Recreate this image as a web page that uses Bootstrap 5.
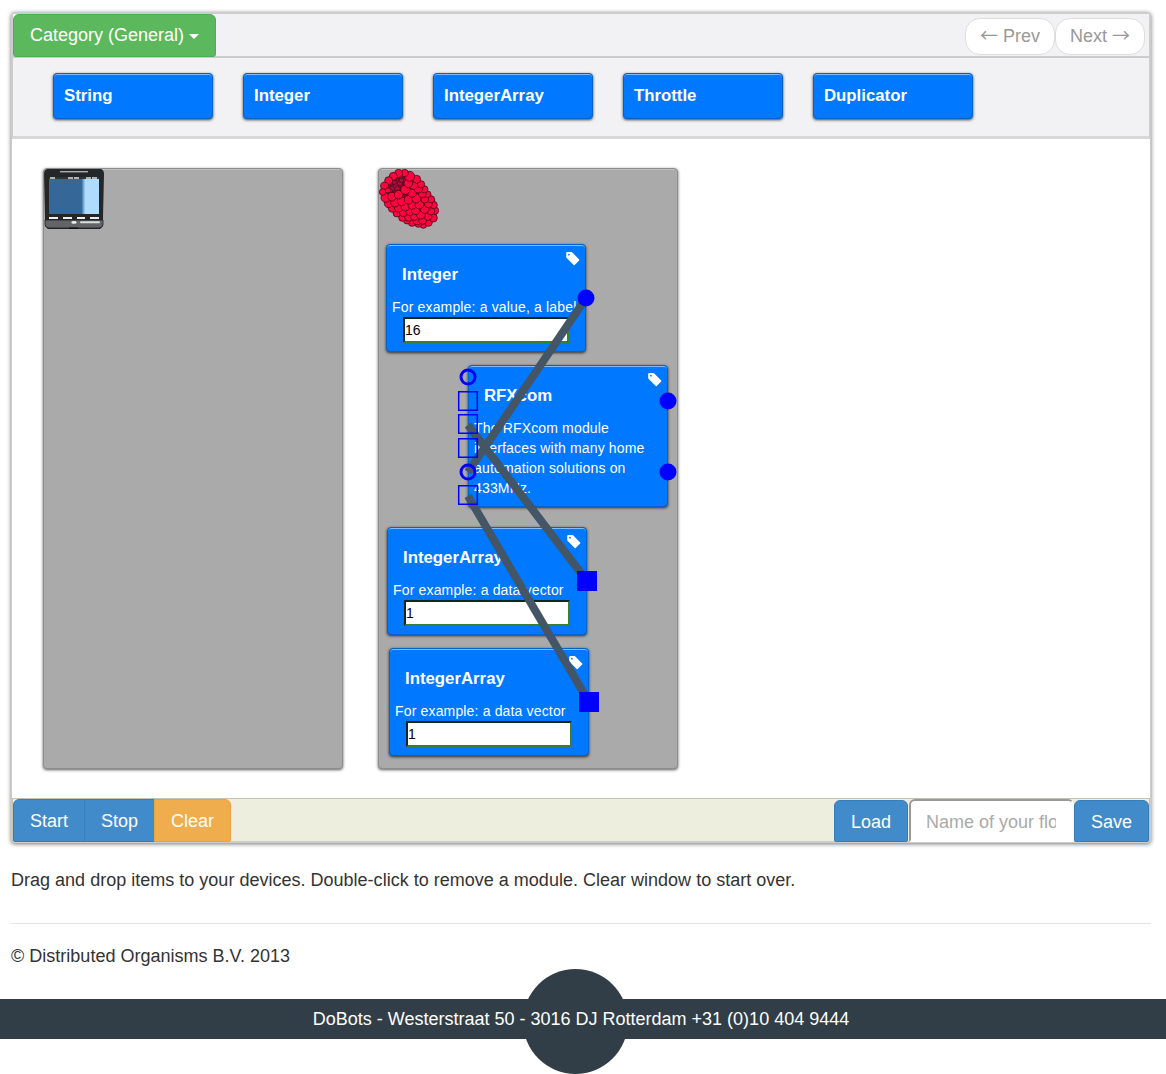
<!DOCTYPE html>
<html lang="en">
<head>
<meta charset="utf-8">
<title>DoBots flow editor</title>
<link href="https://cdn.jsdelivr.net/npm/bootstrap@5.3.0/dist/css/bootstrap.min.css" rel="stylesheet">
<style>
body{font-family:"Liberation Sans",Arial,sans-serif;font-size:18px;line-height:26px;color:#333;min-height:1074px;background:#fff}
.editor{margin:12px 15px 0 11px;height:831px;border:1px solid #ccc;border-radius:4px;box-shadow:0 1px 4px rgba(0,0,0,.55);background:#fff}
.catbar{height:45px;background:#f2f2f4;border:1px solid #ccc;border-bottom-width:2px}
.palette{height:81px;background:#f2f2f4;border:1px solid #ccc;border-top:0;border-bottom:3px solid #d8d8d8;padding:15px 0 0 40px;gap:30px}
.btn{--bs-btn-font-size:18px;--bs-btn-line-height:24px;--bs-btn-padding-x:16px;--bs-btn-padding-y:9px;--bs-btn-border-radius:6px;--bs-btn-color:#fff;white-space:nowrap}
.btn-cat{--bs-btn-bg:#5cb85c;--bs-btn-border-color:#4cae4c;height:43px;width:203px;padding:8px 0 9px 16px;text-align:left;border-radius:6px 6px 3px 3px}
.btn-cat.dropdown-toggle::after{margin-left:5px;border-top-width:5px;border-left-width:5px;border-right-width:5px;vertical-align:2px}
.btn-blue{--bs-btn-bg:#428bca;--bs-btn-border-color:#357ebd}
.btn-amber{--bs-btn-bg:#f0ad4e;--bs-btn-border-color:#eea236}
.pagelink{width:90px;height:37px;border:1px solid #ddd;border-radius:15px;background:#fff;color:#999;padding:4px 0 0 14px;text-decoration:none;white-space:nowrap}
.arrow{font-family:"Noto Sans CJK JP",sans-serif;line-height:1}
.block{background:#0078ff;border:1px solid #0062cc;border-radius:4px;box-shadow:0 1px 3px rgba(0,0,0,.75),inset 0 1px 0 rgba(255,255,255,.5);color:#fff}
.block h2{font-size:16.8px;font-weight:700;line-height:20px;margin:0}
.block-sm{width:160px;height:46px;padding:12px 10px}
.stage{height:659px;padding:29px 31px 0;gap:35px}
.device{width:300px;height:601px;background:#aaa;border:1px solid #8e8e8e;border-radius:4px;box-shadow:0 1px 3px rgba(0,0,0,.65),inset 0 1px 0 rgba(255,255,255,.25);position:relative}
.device>svg{display:block}
.node{position:absolute;width:200px;padding:20px 5px 0}
.node h2{margin-left:10px;margin-bottom:12px}
.node p{font-size:14px;line-height:20px;letter-spacing:.16px;margin:0;white-space:nowrap}
.node p.wraps{white-space:normal}
.node input{display:block;width:166px;height:26px;margin-left:11px;border:2px solid;border-color:#10281b #3a7d34 #3a7d34 #10281b;padding:0;font-size:14px;color:#000;background:#fff;border-radius:0;outline:0}
.node .tag{position:absolute;right:5px;top:6px}
.n1{left:7px;top:75px;height:108px}.n2{left:89px;top:196px;height:142px}.n3{left:8px;top:358px;height:108px}.n4{left:10px;top:479px;height:108px}
.wires{position:absolute;left:0;top:0;pointer-events:none}
.bottombar{height:44px;background:#eeeedf;border:1px solid #c3c3b2;border-bottom-color:#ccc}
.bottombar .btn{height:43px;border-bottom-left-radius:2px;border-bottom-right-radius:2px}
.bottombar .saveset .btn{margin-top:1px;height:42px}
.flowname{width:165px;height:43px;border:2px solid;border-color:#999 #fff #fff #999;border-radius:6px 6px 0 0;padding:3px 16px 0 15px;font-size:18px;outline:0;background:#fff;margin-left:1px}
.flowname::placeholder{color:#aaa}
.notes{margin:24px 15px 0 11px;letter-spacing:.01px}
.notes hr{margin:30px 0 19px;border-color:#e4e4e4;opacity:1}
.foot{height:40px;background:#313e47;position:relative;color:#fff;margin-top:30px}
.disc{position:absolute;width:105px;height:105px;border-radius:50%;background:#313e47;left:522.5px;top:-30px}
.foot span{position:relative;left:-2px}
</style>
<script src="https://cdn.jsdelivr.net/npm/bootstrap@5.3.0/dist/js/bootstrap.bundle.min.js"></script>
</head>
<body>
<main class="editor">
  <div class="catbar d-flex justify-content-between">
    <button class="btn btn-cat dropdown-toggle">Category (General)</button>
    <div class="d-flex pt-1 pe-1"><a class="pagelink"><span class="arrow">←</span> Prev</a><a class="pagelink">Next <span class="arrow">→</span></a></div>
  </div>
  <div class="palette d-flex">
    <div class="block block-sm"><h2>String</h2></div>
    <div class="block block-sm"><h2>Integer</h2></div>
    <div class="block block-sm"><h2>IntegerArray</h2></div>
    <div class="block block-sm"><h2>Throttle</h2></div>
    <div class="block block-sm"><h2>Duplicator</h2></div>
  </div>
  <div class="stage d-flex">
    <section class="device">
      <svg width="60" height="60" viewBox="0 0 60 60">
        <path d="M3 0H57Q60 1 60 5L59 48V57L56 60H4L1 57V48L0 5Q0 1 3 0Z" fill="#242628"/>
        <path d="M1 51H59V56Q58 59 55 59H5Q2 59 1 56Z" fill="#626467" stroke="#222" stroke-width=".8"/>
        <path d="M16 2.7H44" stroke="#aaa" stroke-width="1.5"/>
        <path d="M5 9H55V45H5Z" fill="#356799"/><path d="M40 9H55V45H40Z" fill="#afdbff"/><path d="M38.5 9H40.5V45H38.5Z" fill="#79a7ce"/>
        <path d="M5 9H55" stroke="#333" stroke-width="2"/><path d="M6 9H11M24 9H35M42 9H54" stroke="#ddd" stroke-width="1.3" stroke-dasharray="5 1"/>
        <path d="M5 49H14M19 49H28M33 49H41M46 49H55" stroke="#eee" stroke-width="1.8"/>
        <path d="M37 53.2H55" stroke="#ddd" stroke-width="2" stroke-linecap="round"/><ellipse cx="30" cy="53.4" rx="2.7" ry="1.3" fill="#eee"/><path d="M25 59.2H34" stroke="#111" stroke-width="1.5"/>
      </svg>
    </section>
    <section class="device">
      <svg width="60" height="60" viewBox="42 42 180 180">
        <path d="M60 80L100 50L145 60L210 135L215 180L185 212L145 205L60 135Z" fill="#8a0a2c"/>
        <g fill="#ff0540" stroke="#3a0512" stroke-width="2.2">
          <g fill="#a80f3f" stroke-width="1.5"><circle cx="82" cy="101" r="8"/><circle cx="92" cy="92" r="8"/><circle cx="105" cy="84" r="8"/><circle cx="88" cy="82" r="7"/><circle cx="97" cy="101" r="8"/><circle cx="109" cy="76" r="7"/><circle cx="76" cy="108" r="7"/></g>
          <circle cx="175" cy="210" r="10"/><circle cx="160" cy="207" r="10"/><circle cx="190" cy="202" r="12"/><circle cx="141" cy="203" r="11"/><circle cx="156" cy="198" r="12"/><circle cx="173" cy="196" r="12"/><circle cx="126" cy="197" r="10"/>
          <circle cx="205" cy="189" r="12"/><circle cx="189" cy="184" r="12"/><circle cx="112" cy="188" r="11"/><circle cx="131" cy="187" r="12"/><circle cx="148" cy="184" r="12"/><circle cx="168" cy="179" r="13"/><circle cx="210" cy="167" r="11"/><circle cx="198" cy="169" r="11"/>
          <circle cx="96" cy="174" r="12"/><circle cx="115" cy="173" r="12"/><circle cx="134" cy="170" r="12"/><circle cx="152" cy="166" r="13"/><circle cx="179" cy="162" r="13"/><circle cx="206" cy="150" r="11"/><circle cx="190" cy="146" r="12"/>
          <circle cx="82" cy="160" r="12"/><circle cx="101" cy="158" r="13"/><circle cx="121" cy="155" r="13"/><circle cx="142" cy="150" r="13"/><circle cx="163" cy="149" r="13"/><circle cx="198" cy="133" r="11"/><circle cx="179" cy="132" r="12"/>
          <circle cx="71" cy="145" r="13"/><circle cx="90" cy="143" r="13"/><circle cx="110" cy="139" r="13"/><circle cx="131" cy="134" r="13"/><circle cx="154" cy="130" r="14"/><circle cx="188" cy="118" r="10"/><circle cx="172" cy="116" r="12"/>
          <circle cx="178" cy="103" r="11"/><circle cx="141" cy="114" r="13"/><circle cx="160" cy="101" r="13"/><circle cx="168" cy="88" r="11"/><circle cx="62" cy="128" r="14"/><circle cx="81" cy="125" r="13"/><circle cx="101" cy="119" r="13"/>
          <circle cx="121" cy="104" r="14"/><circle cx="145" cy="90" r="13"/><circle cx="155" cy="73" r="12"/><circle cx="130" cy="85" r="13"/><circle cx="134" cy="64" r="15"/><circle cx="119" cy="54" r="11"/><circle cx="101" cy="55" r="12"/><circle cx="85" cy="64" r="12"/><circle cx="71" cy="77" r="12"/><circle cx="59" cy="93" r="12"/><circle cx="53" cy="111" r="10"/><circle cx="69" cy="106" r="8"/>
        </g>
      </svg>
      <article class="block node n1"><svg class="tag" width="15" height="15" viewBox="0 0 15 15"><path fill="#fff" fill-rule="evenodd" d="M2.2 1H6.8L14.2 8.4Q14.6 8.9 14.2 9.4L9.7 14Q9.2 14.5 8.7 14L1.2 6.5V2Q1.2 1 2.2 1ZM3.9 2.8a.9 .9 0 1 0 .1 1.8a.9 .9 0 1 0-.1-1.8Z"/></svg><h2>Integer</h2><p>For example: a value, a label</p><input value="16"></article>
      <article class="block node n2"><svg class="tag" width="15" height="15" viewBox="0 0 15 15"><path fill="#fff" fill-rule="evenodd" d="M2.2 1H6.8L14.2 8.4Q14.6 8.9 14.2 9.4L9.7 14Q9.2 14.5 8.7 14L1.2 6.5V2Q1.2 1 2.2 1ZM3.9 2.8a.9 .9 0 1 0 .1 1.8a.9 .9 0 1 0-.1-1.8Z"/></svg><h2>RFXcom</h2><p class="wraps">The RFXcom module interfaces with many home automation solutions on 433MHz.</p></article>
      <article class="block node n3"><svg class="tag" width="15" height="15" viewBox="0 0 15 15"><path fill="#fff" fill-rule="evenodd" d="M2.2 1H6.8L14.2 8.4Q14.6 8.9 14.2 9.4L9.7 14Q9.2 14.5 8.7 14L1.2 6.5V2Q1.2 1 2.2 1ZM3.9 2.8a.9 .9 0 1 0 .1 1.8a.9 .9 0 1 0-.1-1.8Z"/></svg><h2>IntegerArray</h2><p>For example: a data vector</p><input value="1"></article>
      <article class="block node n4"><svg class="tag" width="15" height="15" viewBox="0 0 15 15"><path fill="#fff" fill-rule="evenodd" d="M2.2 1H6.8L14.2 8.4Q14.6 8.9 14.2 9.4L9.7 14Q9.2 14.5 8.7 14L1.2 6.5V2Q1.2 1 2.2 1ZM3.9 2.8a.9 .9 0 1 0 .1 1.8a.9 .9 0 1 0-.1-1.8Z"/></svg><h2>IntegerArray</h2><p>For example: a data vector</p><input value="1"></article>
      <svg class="wires" width="310" height="600" viewBox="379 169 310 600">
        <path d="M586 298L468 472M468 425L587 581M468 496L589 702" stroke="#456" stroke-width="8" fill="none"/>
        <g fill="#00f"><circle cx="586" cy="298" r="8.5"/><circle cx="668" cy="401" r="8.5"/><circle cx="668" cy="472" r="8.5"/><path d="M577 571h20v20h-20zM579 692h20v20h-20z"/></g>
        <g fill="none" stroke="#00f"><g stroke-width="3"><circle cx="468" cy="377" r="7"/><circle cx="468" cy="472" r="7"/></g><path stroke-width="1.5" d="M458.7 391.7h18.6v18.6h-18.6zM458.7 414.7h18.6v18.6h-18.6zM458.7 438.7h18.6v18.6h-18.6zM458.7 485.7h18.6v18.6h-18.6z"/></g>
      </svg>
    </section>
  </div>
  <div class="bottombar d-flex justify-content-between">
    <div class="btn-group"><button class="btn btn-blue">Start</button><button class="btn btn-blue">Stop</button><button class="btn btn-amber">Clear</button></div>
    <div class="saveset d-flex"><button class="btn btn-blue">Load</button><input class="flowname" placeholder="Name of your flow"><button class="btn btn-blue">Save</button></div>
  </div>
</main>
<div class="notes">
  <p class="mb-0">Drag and drop items to your devices. Double-click to remove a module. Clear window to start over.</p>
  <hr>
  <p class="mb-0">© Distributed Organisms B.V. 2013</p>
</div>
<footer class="foot d-flex align-items-center justify-content-center"><div class="disc"></div><span>DoBots - Westerstraat 50 - 3016 DJ Rotterdam +31 (0)10 404 9444</span></footer>
</body>
</html>
